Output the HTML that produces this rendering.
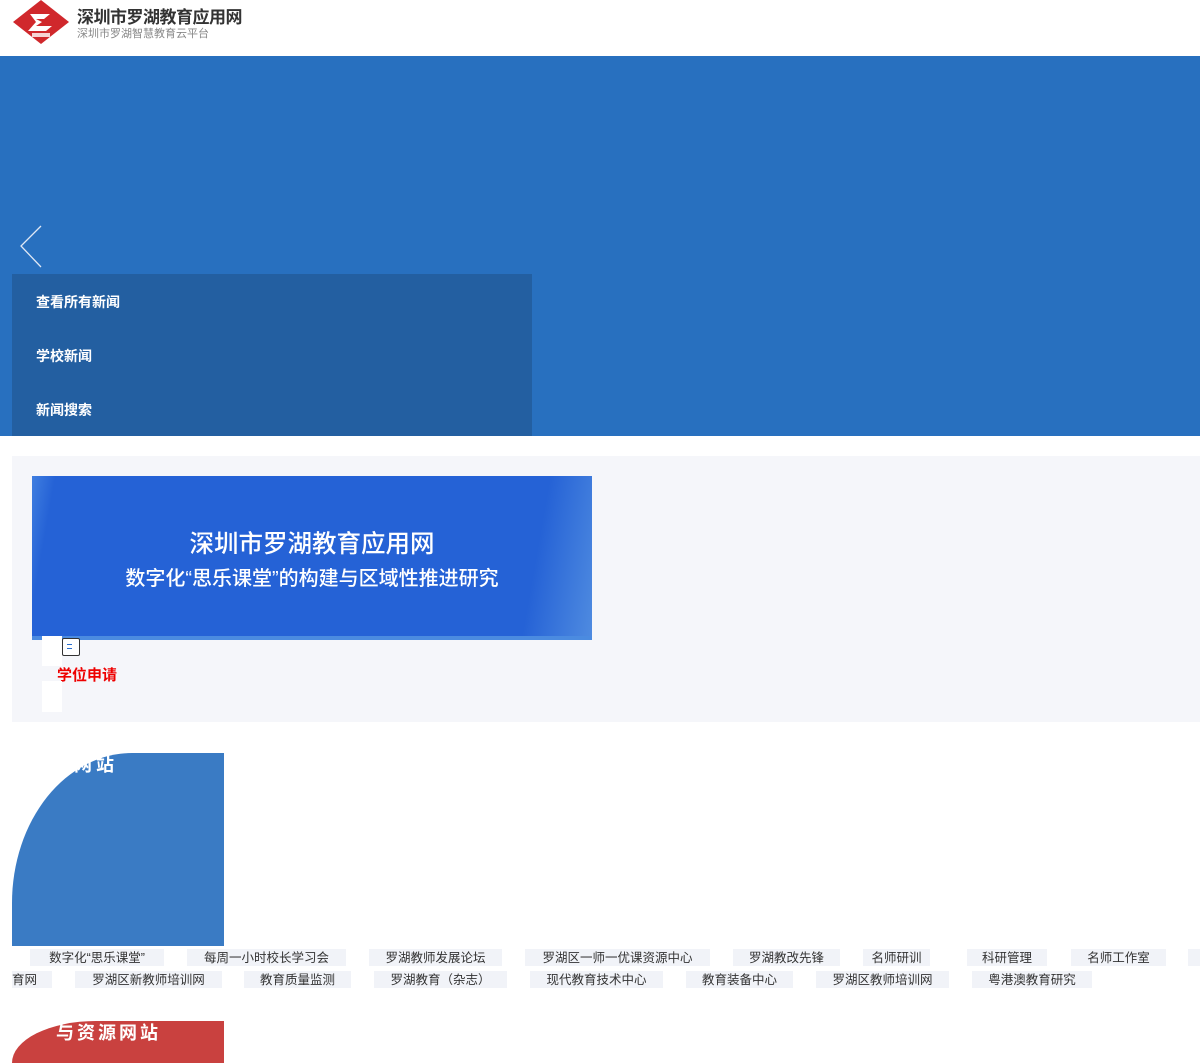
<!DOCTYPE html>
<html style="height:1063px;overflow:hidden"><head><meta charset="utf-8"><style>
*{margin:0;padding:0;box-sizing:border-box}
body{width:1200px;height:1063px;position:relative;overflow:hidden;background:#fff;font-family:"Liberation Sans","Noto Sans CJK SC",sans-serif}
.a{position:absolute}
.tag{position:absolute;height:17px;background:#f1f3f8;font-size:12.5px;color:#333;line-height:18px;text-align:center;white-space:nowrap;overflow:hidden}
.nav{position:absolute;left:36px;color:#fff;font-size:14px;font-weight:bold}
</style></head><body>
<svg class="a" style="left:12px;top:0" width="58" height="44" viewBox="0 0 58 44">
<polygon points="29,0 57,22 29,44 1,22" fill="#d0282c"/>
<path d="M18 14 L38 14 L32 19 L24 19 L30 22 L24 26 L40 26 L34 31 L16 31 L24 22 Z" fill="#fff"/>
<rect x="20" y="33" width="18" height="4" fill="#fff" opacity=".8"/>
</svg>
<div class="a" style="left:77px;top:3px;font-size:17px;font-weight:bold;color:#333;letter-spacing:-0.5px">深圳市罗湖教育应用网</div>
<div class="a" style="left:77px;top:25px;font-size:11px;color:#888">深圳市罗湖智慧教育云平台</div>
<div class="a" style="left:0;top:56px;width:1200px;height:380px;background:#2870bf"></div>
<svg class="a" style="left:18px;top:224px" width="26" height="46"><polyline points="23,2 3,22 23,43" fill="none" stroke="#dfe8f5" stroke-width="1.3"/></svg>
<div class="a" style="left:12px;top:274px;width:520px;height:162px;background:#235fa1"></div>
<div class="nav" style="top:292px">查看所有新闻</div>
<div class="nav" style="top:346px">学校新闻</div>
<div class="nav" style="top:400px">新闻搜索</div>
<div class="a" style="left:12px;top:456px;width:1188px;height:266px;background:#f5f6fa"></div>
<div class="a" style="left:32px;top:476px;width:560px;height:164px;background:linear-gradient(100deg,#3f7ee0 0%,#2562d6 4%,#2562d6 88%,#4f8be0 100%);overflow:hidden">
<div class="a" style="left:0;bottom:0;width:560px;height:4px;background:#4b8be0"></div>
<div class="a" style="left:0;top:49px;width:560px;text-align:center;color:#fff;font-size:24.5px;font-weight:500">深圳市罗湖教育应用网</div>
<div class="a" style="left:0;top:86px;width:560px;text-align:center;color:#fff;font-size:20px;font-weight:500">数字化“思乐课堂”的构建与区域性推进研究</div>
</div>
<div class="a" style="left:42px;top:636px;width:20px;height:30px;background:#fff"></div>
<div class="a" style="left:62px;top:638px;width:18px;height:18px;border:1.5px solid #333;border-radius:2px;background:#fff"><div class="a" style="left:4px;top:5px;width:5px;height:1px;background:#2a6fcf"></div><div class="a" style="left:4px;top:9px;width:5px;height:1px;background:#2a6fcf"></div></div>
<div class="a" style="left:57px;top:664px;color:#e00;font-size:15px;font-weight:bold">学位申请</div>
<div class="a" style="left:42px;top:681px;width:20px;height:31px;background:#fff"></div>
<div class="a" style="left:12px;top:753px;width:212px;height:193px;background:#3a7bc4;border-top-left-radius:120px 150px"></div>
<div class="a" style="left:52px;top:751px;color:#fff;font-size:18px;font-weight:bold;letter-spacing:4px">址网站</div>
<div class="tag" style="left:30px;top:949px;width:134px">数字化“思乐课堂”</div>
<div class="tag" style="left:187px;top:949px;width:159px">每周一小时校长学习会</div>
<div class="tag" style="left:369px;top:949px;width:133px">罗湖教师发展论坛</div>
<div class="tag" style="left:525px;top:949px;width:185px">罗湖区一师一优课资源中心</div>
<div class="tag" style="left:733px;top:949px;width:107px">罗湖教改先锋</div>
<div class="tag" style="left:863px;top:949px;width:67px">名师研训</div>
<div class="tag" style="left:967px;top:949px;width:80px">科研管理</div>
<div class="tag" style="left:1071px;top:949px;width:95px">名师工作室</div>
<div class="tag" style="left:1188px;top:949px;width:12px"></div>
<div class="tag" style="left:12px;top:971px;width:40px;text-align:left">育网</div>
<div class="tag" style="left:75px;top:971px;width:147px">罗湖区新教师培训网</div>
<div class="tag" style="left:244px;top:971px;width:107px">教育质量监测</div>
<div class="tag" style="left:374px;top:971px;width:133px">罗湖教育（杂志）</div>
<div class="tag" style="left:530px;top:971px;width:133px">现代教育技术中心</div>
<div class="tag" style="left:686px;top:971px;width:107px">教育装备中心</div>
<div class="tag" style="left:816px;top:971px;width:133px">罗湖区教师培训网</div>
<div class="tag" style="left:972px;top:971px;width:120px">粤港澳教育研究</div>
<div class="a" style="left:12px;top:1021px;width:212px;height:42px;background:#c9413f;border-top-left-radius:120px 60px"></div>
<div class="a" style="left:56px;top:1019px;color:#fff;font-size:18px;font-weight:bold;letter-spacing:3px">与资源网站</div>
</body></html>
